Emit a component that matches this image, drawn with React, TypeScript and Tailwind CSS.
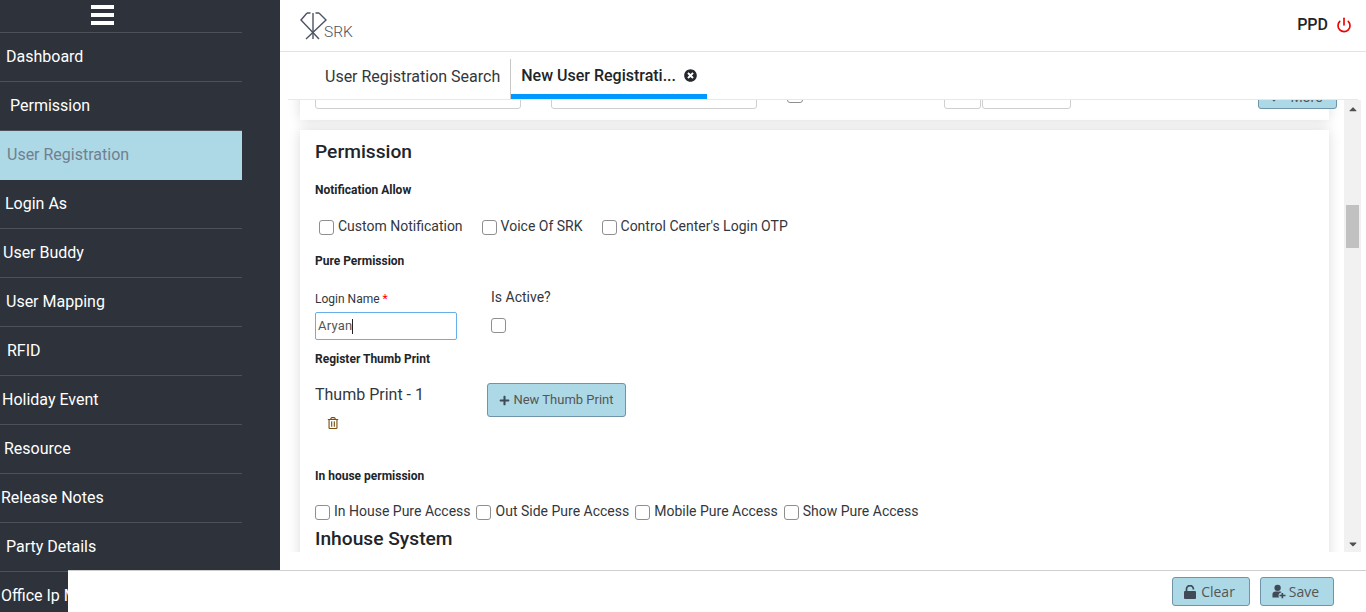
import React from 'react';
import { FaTimesCircle, FaRegTrashAlt, FaPlus, FaCaretUp, FaCaretDown, FaAngleDown } from 'react-icons/fa';
import { Power } from 'lucide-react';

const menuItems = [
  { label: 'Dashboard', pad: 'pl-[6px]' },
  { label: 'Permission', pad: 'pl-[10px]' },
  { label: 'User Registration', pad: 'pl-[7px]', active: true },
  { label: 'Login As', pad: 'pl-[5px]' },
  { label: 'User Buddy', pad: 'pl-[3px]' },
  { label: 'User Mapping', pad: 'pl-[6px]' },
  { label: 'RFID', pad: 'pl-[7px]' },
  { label: 'Holiday Event', pad: 'pl-[2px]' },
  { label: 'Resource', pad: 'pl-[4px]' },
  { label: 'Release Notes', pad: 'pl-[1px]' },
  { label: 'Party Details', pad: 'pl-[6px]' },
  { label: 'Office Ip Mapping', pad: 'pl-[1px]' },
];

const Check = () => (
  <input type="checkbox" className="appearance-none w-[15px] h-[15px] mt-[2px] shrink-0 bg-white border border-[#8f8f8f] rounded-[3px]" />
);

const SectionLabel = ({ children, className = '' }: { children: React.ReactNode; className?: string }) => (
  <div className={`text-[12px] leading-[16px] font-bold text-[#212529] ${className}`}>{children}</div>
);

const Logo = () => (
  <div className="flex items-end">
    <svg width="27" height="28" viewBox="0 0 27 28" fill="none" stroke="#4d5362" strokeWidth="1.4">
      <path d="M7 1 L1 8 L19 27" />
      <path d="M19 1 L26 8 L6 27" />
      <path d="M7 1 H10.5 M15.5 1 H19" />
      <path d="M13 1 V27" />
    </svg>
    <span className="-ml-[3px] -mb-[1px] text-[15.5px] leading-[18px] font-light text-[#4b5160]">SRK</span>
  </div>
);

const ClearIcon = () => (
  <svg width="12" height="14" viewBox="0 0 12 14">
    <rect x="0" y="6" width="12" height="8" rx="1" fill="#3f4a56" />
    <path d="M2.5 6 V4 A3.4 3.4 0 0 1 9.4 4 V4.6" fill="none" stroke="#3f4a56" strokeWidth="1.7" />
  </svg>
);

const SaveIcon = () => (
  <svg width="14" height="15" viewBox="0 0 15 15" fill="#3f4a56">
    <circle cx="6" cy="3.6" r="3.4" />
    <path d="M0.5 14 V10.5 C0.5 8.5 2 7.5 3.5 7.5 H8.5 C9.5 7.5 10 8 10 8.5 A3.5 3.5 0 0 0 7.6 14 Z" />
    <path d="M10.2 9 H12 V11 H14.5 V12.6 H12 V14.8 H10.2 V12.6 H8 V11 H10.2 Z" />
  </svg>
);

const App: React.FC = () => {
  return (
    <div className="relative flex h-screen overflow-hidden bg-white font-['Roboto',sans-serif] text-[#212529]">
      {/* Sidebar */}
      <aside className="w-[280px] shrink-0 bg-[#2d323b] overflow-hidden">
        <div className="w-[242px]">
          <div className="h-[32px] flex flex-col items-start gap-[4px] pt-[5px] pl-[91px]">
            <span className="block w-[23px] h-[4px] bg-white"></span>
            <span className="block w-[23px] h-[4px] bg-white"></span>
            <span className="block w-[23px] h-[4px] bg-white"></span>
          </div>
          {menuItems.map(item => (
            <div
              key={item.label}
              className={`h-[49px] flex items-center border-t border-[#4c5059] text-[16px] whitespace-nowrap ${item.pad} ${item.active ? 'relative bg-[#add8e6] text-[#708090] shadow-[0_1px_0_#add8e6]' : 'text-white'}`}
            >
              {item.label}
            </div>
          ))}
        </div>
      </aside>

      {/* Main */}
      <main className="flex-1 min-w-0 flex flex-col">
        <header className="h-[52px] shrink-0 border-b border-[#e3e3e3] flex items-center justify-between pl-[20px] pr-[14px]">
          <Logo />
          <div className="flex items-center gap-[8px] -mt-[1px]">
            <span className="text-[16px] font-medium">PPD</span>
            <Power size={16} strokeWidth={2.5} className="text-[#f00000]" />
          </div>
        </header>

        {/* Tabs */}
        <div className="h-[48px] shrink-0 ml-[8px] mr-[8px] border-b border-[#e8e8e8] flex items-end">
          <div className="h-[40px] ml-[37px] pr-[10px] flex items-center border-r border-[#c8c8c8] text-[16px] text-[#33373d] pb-[5px]">
            User Registration Search
          </div>
          <div className="h-[40px] w-[196px] pl-[10px] flex items-center gap-[8px] border-b-[5px] border-[#0099ff] text-[16px] font-medium pb-[2px]">
            <span>New User Registrati...</span>
            <FaTimesCircle size={13} className="text-[#25282d]" />
          </div>
        </div>

        {/* Form area */}
        <div className="h-[452px] shrink-0 flex">
          <div className="flex-1 min-w-0 overflow-hidden pl-[20px] pr-[15px]">
            {/* First card, scrolled out */}
            <div className="h-[100px] -mt-[80px] bg-white shadow-[0_0_12px_rgba(0,0,0,0.14)] flex items-end pl-[15px] pb-[11px]">
              <div className="w-[206px] h-[34px] border border-[#cfcfcf] rounded-[3px]"></div>
              <div className="w-[206px] h-[34px] ml-[30px] border border-[#cfcfcf] rounded-[3px]"></div>
              <div className="w-[16px] h-[15px] ml-[30px] mb-[6px] border border-[#8f8f8f] rounded-[3px]"></div>
              <div className="w-[37px] h-[34px] ml-[141px] border border-[#cfcfcf] rounded-[3px]"></div>
              <div className="w-[89px] h-[34px] ml-[1px] border border-[#cfcfcf] rounded-[3px]"></div>
              <button className="w-[79px] h-[29px] ml-auto -mr-[8px] pt-[5px] pr-[4px] flex items-center justify-center gap-[10px] bg-[#add8e6] border border-[#6f93a8] rounded-[3px] text-[14px] text-[#555]">
                <FaAngleDown size={12} className="mt-[3px]" />
                More
              </button>
            </div>

            {/* Permission card */}
            <div className="mt-[10px] h-[600px] bg-white shadow-[0_0_12px_rgba(0,0,0,0.14)] px-[15px] pt-[10px]">
              <h2 className="text-[19.2px] leading-[24px] font-medium">Permission</h2>
              <SectionLabel className="mt-[18px]">Notification Allow</SectionLabel>

              <div className="mt-[19px] h-[18px] flex items-center pl-[4px] text-[14px] text-[#33373d]">
                <Check />
                <span className="ml-[4px]">Custom Notification</span>
                <span className="ml-[19px] flex"><Check /></span>
                <span className="ml-[4px]">Voice Of SRK</span>
                <span className="ml-[19px] flex"><Check /></span>
                <span className="ml-[4px]">Control Center's Login OTP</span>
              </div>

              <SectionLabel className="mt-[18px]">Pure Permission</SectionLabel>

              <div className="mt-[22px] flex">
                <div className="w-[176px]">
                  <div className="text-[12px] leading-[16px] text-[#33373d]">Login Name <span className="text-[#ff0000]">*</span></div>
                  <div className="mt-[5px] w-[142px] h-[28px] flex items-center pl-[2px] border border-[#66afe9] rounded-[2px] text-[13px] tracking-[0.2px] text-[#555]">
                    Aryan
                    <span className="block w-px h-[15px] bg-[#222]"></span>
                  </div>
                </div>
                <div>
                  <div className="text-[14px] leading-[18px] -mt-[3px] text-[#33373d]">Is Active?</div>
                  <div className="mt-[10px] flex"><Check /></div>
                </div>
              </div>

              <SectionLabel className="mt-[11px]">Register Thumb Print</SectionLabel>

              <div className="mt-[16px] flex">
                <div className="w-[172px] pt-[2px]">
                  <div className="text-[16px] leading-[20px] text-[#33373d]">Thumb Print - 1</div>
                  <FaRegTrashAlt size={12} className="ml-[12px] mt-[12px] text-[#7a4f10]" />
                </div>
                <button className="w-[139px] h-[34px] flex items-center justify-center gap-[3px] bg-[#add8e6] border border-[#6f93a8] rounded-[3px] text-[13px] text-[#555]">
                  <FaPlus size={11} className="text-[#3f4a56]" />
                  New Thumb Print
                </button>
              </div>

              <SectionLabel className="mt-[39px]">In house permission</SectionLabel>

              <div className="mt-[17px] h-[20px] flex items-center text-[14px] text-[#33373d]">
                <Check />
                <span className="ml-[4px]">In House Pure Access</span>
                <span className="ml-[5px] flex"><Check /></span>
                <span className="ml-[5px]">Out Side Pure Access</span>
                <span className="ml-[6px] flex"><Check /></span>
                <span className="ml-[4px]">Mobile Pure Access</span>
                <span className="ml-[6px] flex"><Check /></span>
                <span className="ml-[4px]">Show Pure Access</span>
              </div>

              <h2 className="mt-[6px] text-[19.2px] leading-[24px] font-medium">Inhouse System</h2>
            </div>
          </div>

          {/* Scrollbar */}
          <div className="w-[17px] mr-[5px] shrink-0 bg-[#f1f1f1] flex flex-col items-center">
            <FaCaretUp size={12} className="mt-[3px] text-[#505050]" />
            <div className="w-[13px] h-[43px] mt-[90px] bg-[#c1c1c1]"></div>
            <FaCaretDown size={12} className="mt-auto mb-[2px] text-[#505050]" />
          </div>
        </div>
      </main>

      {/* Footer bar sits over the sidebar */}
      <footer className="absolute bottom-0 left-[68px] right-0 h-[42px] z-10 bg-white border-t border-[#cfcfcf] flex items-start justify-end gap-[10px] pt-[6px] pr-[32px]">
        <button className="w-[78px] h-[29px] pr-[3px] flex items-center justify-center gap-[5px] bg-[#add8e6] border border-[#6f93a8] rounded-[3px] text-[14px] text-[#555] font-['Open_Sans',sans-serif]">
          <ClearIcon />
          Clear
        </button>
        <button className="w-[74px] h-[29px] pr-[3px] flex items-center justify-center gap-[3px] bg-[#add8e6] border border-[#6f93a8] rounded-[3px] text-[14px] text-[#555] font-['Open_Sans',sans-serif]">
          <SaveIcon />
          Save
        </button>
      </footer>
    </div>
  );
};

export default App;
